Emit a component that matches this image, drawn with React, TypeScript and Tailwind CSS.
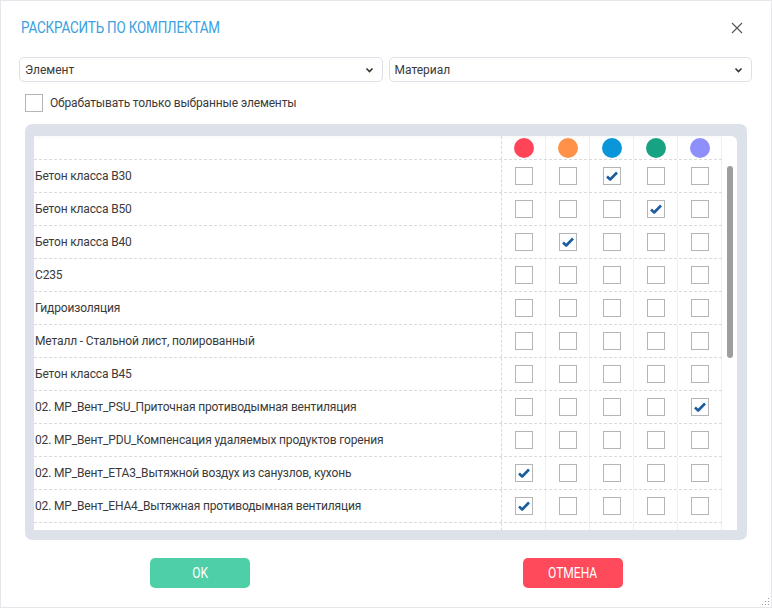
import React from 'react';

const colors = ['#ff4458', '#ff9248', '#0a96d8', '#17a382', '#8f8ffc'];

const rows: { name: string; checked: number | null }[] = [
  { name: 'Бетон класса B30', checked: 2 },
  { name: 'Бетон класса B50', checked: 3 },
  { name: 'Бетон класса B40', checked: 1 },
  { name: 'C235', checked: null },
  { name: 'Гидроизоляция', checked: null },
  { name: 'Металл - Стальной лист, полированный', checked: null },
  { name: 'Бетон класса B45', checked: null },
  { name: '02. MP_Вент_PSU_Приточная противодымная вентиляция', checked: 4 },
  { name: '02. MP_Вент_PDU_Компенсация удаляемых продуктов горения', checked: null },
  { name: '02. MP_Вент_ETA3_Вытяжной воздух из санузлов, кухонь', checked: 0 },
  { name: '02. MP_Вент_EHA4_Вытяжная противодымная вентиляция', checked: 0 },
  { name: '', checked: null },
];

function Chevron() {
  return (
    <svg width="9" height="6" viewBox="0 0 9 6" className="text-[#333]">
      <path d="M1.5 1.5 L4.5 4.5 L7.5 1.5" fill="none" stroke="currentColor" strokeWidth="1.6" />
    </svg>
  );
}

function Select({ label }: { label: string }) {
  return (
    <div className="flex h-[25px] flex-1 items-center justify-between rounded-[5px] border border-[#dde2e8] bg-white pl-[5px] pr-[8px] text-[12px] text-[#3a3a3a]">
      <span>{label}</span>
      <Chevron />
    </div>
  );
}

function Box({ checked }: { checked?: boolean }) {
  return (
    <div className="flex h-[18px] w-[18px] items-center justify-center border border-[#b5b5b5] bg-white">
      {checked ? (
        <svg width="14" height="12" viewBox="0 0 14 12">
          <path d="M2 6.5 L5.2 9.5 L12 2.5" fill="none" stroke="#1b5e9e" strokeWidth="2.6" strokeLinejoin="round" />
        </svg>
      ) : null}
    </div>
  );
}

export default function App() {
  return (
    <div className="relative flex h-[608px] w-[772px] flex-col border border-[#e4e7eb] bg-white font-['Roboto','Liberation_Sans',sans-serif] text-[#3a3a3a]">
      {/* title */}
      <div className="flex h-[52px] items-center justify-between pl-[20px] pr-[28px] pt-[2px]">
        <h1 className="origin-left scale-x-[0.84] text-[16px] tracking-[-0.2px] text-[#3b9fe0]">РАСКРАСИТЬ ПО КОМПЛЕКТАМ</h1>
        <svg width="12" height="12" viewBox="0 0 12 12">
          <path d="M1 1 L11 11 M11 1 L1 11" stroke="#555" strokeWidth="1.1" />
        </svg>
      </div>

      <div className="mt-[4px] flex gap-[6px] pl-[18px] pr-[19px]">
        <Select label="Элемент" />
        <Select label="Материал" />
      </div>

      <div className="mt-[12px] flex items-center gap-[7px] pl-[24px]">
        <div className="h-[18px] w-[18px] border border-[#b5b5b5]" />
        <span className="text-[12px] tracking-[-0.15px]">Обрабатывать только выбранные элементы</span>
      </div>

      {/* table frame */}
      <div className="ml-[24px] mr-[24px] mt-[12px] rounded-[7px] bg-[#dde1e9] pb-[10px] pl-[9px] pr-[10px] pt-[12px]">
        <div className="flex h-[394px] overflow-hidden rounded-tr-[6px] bg-white">
          <div className="flex-1">
            <div className="flex h-[24px] border-b border-dashed border-[#dadada] shadow-[inset_0_4px_4px_-3px_rgba(0,0,0,0.04)]">
              <div className="w-[468px] border-r border-dashed border-[#dadada]" />
              {colors.map((c) => (
                <div key={c} className="flex w-[44px] items-center justify-center border-r border-[#efefef]">
                  <div className="h-[20px] w-[20px] rounded-full" style={{ backgroundColor: c }} />
                </div>
              ))}
            </div>
            {rows.map((r, idx) => (
              <div key={idx} className="flex h-[33px] border-b border-dashed border-[#dadada]">
                <div className="flex w-[468px] items-center border-r border-dashed border-[#dadada] pl-[1px] text-[12px] tracking-[-0.15px]">
                  {r.name}
                </div>
                {colors.map((c, i) => (
                  <div key={c} className="flex w-[44px] items-center justify-center border-r border-[#efefef]">
                    <Box checked={r.checked === i} />
                  </div>
                ))}
              </div>
            ))}
          </div>
          <div className="w-[15px] pl-[5px] pt-[30px]">
            <div className="h-[192px] w-[6px] rounded-[3px] bg-[#9e9e9e]" />
          </div>
        </div>
      </div>

      <div className="mt-[18px] flex pl-[149px]">
        <button className="flex h-[30px] w-[100px] items-center justify-center rounded-[5px] bg-[#4fcfa7] text-[14px] text-white">
          <span className="scale-x-[0.86]">OK</span>
        </button>
        <button className="ml-[273px] flex h-[30px] w-[100px] items-center justify-center rounded-[5px] bg-[#ff4a5c] text-[14px] text-white">
          <span className="scale-x-[0.86]">ОТМЕНА</span>
        </button>
      </div>

      {/* resize grip */}
      <svg className="absolute bottom-[1px] right-[1px]" width="10" height="10" viewBox="0 0 10 10">
        {[[8, 2], [8, 5], [8, 8], [5, 5], [5, 8], [2, 8]].map(([x, y]) => (
          <rect key={`${x}-${y}`} x={x} y={y} width="1" height="1" fill="#999" />
        ))}
      </svg>
    </div>
  );
}
